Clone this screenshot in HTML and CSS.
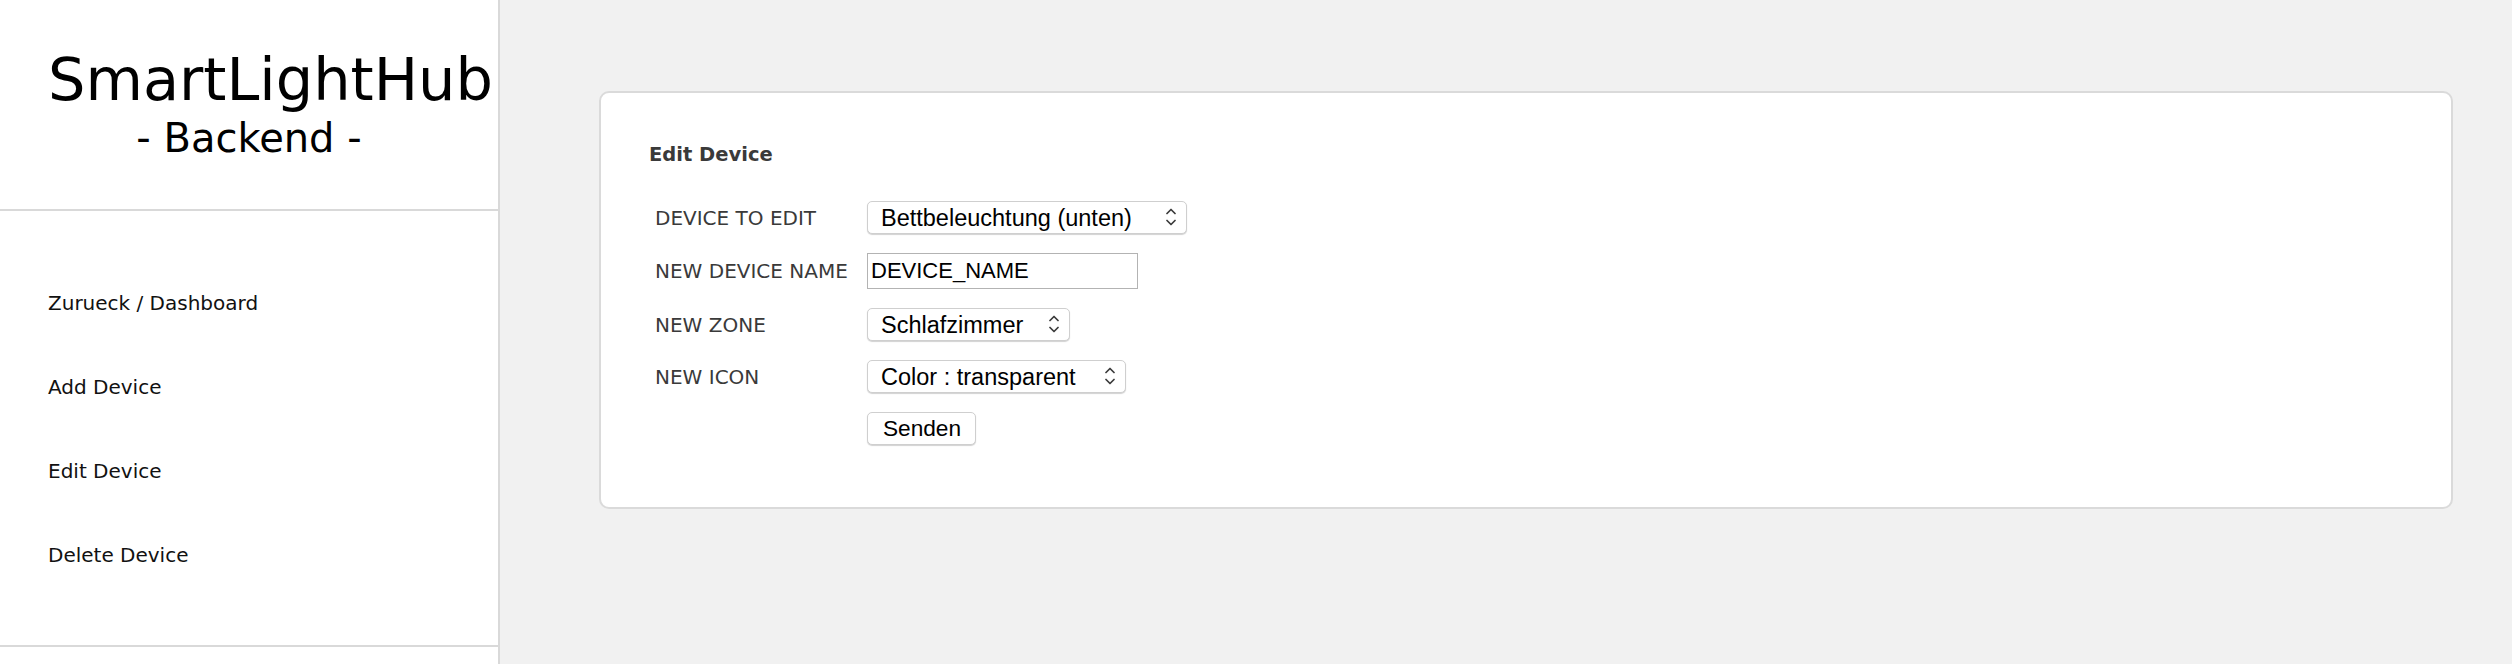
FILE: index.html
```html
<!DOCTYPE html>
<html lang="de">
<head>
<meta charset="utf-8">
<title>SmartLightHub - Backend</title>
<link rel="stylesheet" href="styles.css">
</head>
<body>
<aside class="sidebar">
  <header class="brand">
    <h1 class="brand-title">SmartLightHub</h1>
    <div class="brand-sub">- Backend -</div>
  </header>
  <nav class="nav">
    <a class="nav-link" href="#">Zurueck / Dashboard</a>
    <a class="nav-link" href="#">Add Device</a>
    <a class="nav-link" href="#">Edit Device</a>
    <a class="nav-link" href="#">Delete Device</a>
  </nav>
</aside>
<main class="main">
  <section class="card">
    <h2 class="card-title">Edit Device</h2>
    <form class="form-grid">
      <label class="field-label">DEVICE TO EDIT</label>
      <span class="select-wrap sel-device">
        <select class="select"><option>Bettbeleuchtung (unten)</option></select>
        <svg class="chev" width="10" height="20" viewBox="0 0 10 20"><path d="M1 6.5 L5 2.5 L9 6.5 M1 13.5 L5 17.5 L9 13.5" fill="none" stroke="#3a3a3a" stroke-width="1.7" stroke-linecap="round" stroke-linejoin="round"/></svg>
      </span>
      <label class="field-label">NEW DEVICE NAME</label>
      <input class="text-input" type="text" value="DEVICE_NAME">
      <label class="field-label">NEW ZONE</label>
      <span class="select-wrap sel-zone">
        <select class="select"><option>Schlafzimmer</option></select>
        <svg class="chev" width="10" height="20" viewBox="0 0 10 20"><path d="M1 6.5 L5 2.5 L9 6.5 M1 13.5 L5 17.5 L9 13.5" fill="none" stroke="#3a3a3a" stroke-width="1.7" stroke-linecap="round" stroke-linejoin="round"/></svg>
      </span>
      <label class="field-label">NEW ICON</label>
      <span class="select-wrap sel-icon">
        <select class="select"><option>Color : transparent</option></select>
        <svg class="chev" width="10" height="20" viewBox="0 0 10 20"><path d="M1 6.5 L5 2.5 L9 6.5 M1 13.5 L5 17.5 L9 13.5" fill="none" stroke="#3a3a3a" stroke-width="1.7" stroke-linecap="round" stroke-linejoin="round"/></svg>
      </span>
      <span class="field-label"></span>
      <div><button class="btn" type="button">Senden</button></div>
    </form>
  </section>
</main>
</body>
</html>
```

FILE: styles.css
```css
* { box-sizing: border-box; }
html, body { margin: 0; padding: 0; }
body {
  display: flex;
  min-height: 664px;
  background: #f1f1f1;
  font-family: "DejaVu Sans", Verdana, sans-serif;
  color: #000;
}
.sidebar {
  width: 500px;
  flex: 0 0 500px;
  background: #fff;
  border-right: 2px solid #d9d9d9;
}
.brand {
  padding: 48px 48px 48px;
  border-bottom: 2px solid #d9d9d9;
  text-align: center;
}
.brand-title {
  margin: 0;
  font-weight: normal;
  font-size: 59px;
  line-height: 64px;
  white-space: nowrap;
  text-align: left;
}
.brand-sub {
  margin-top: 3px;
  font-size: 40px;
  line-height: 46px;
}
.nav {
  display: flex;
  flex-direction: column;
  padding: 50px 48px 48px;
  border-bottom: 2px solid #d9d9d9;
}
.nav-link {
  display: block;
  padding: 30px 0;
  font-size: 20px;
  line-height: 24px;
  color: #111;
  text-decoration: none;
}
.main {
  flex: 1;
  padding: 91px 59px 0 99px;
}
.card {
  background: #fff;
  border: 2px solid #dadada;
  border-radius: 10px;
  padding: 50px 48px 62px;
}
.card-title {
  margin: 0 0 34px;
  font-size: 19.5px;
  line-height: 24px;
  font-weight: bold;
  color: #3a3a3a;
}
.form-grid {
  display: grid;
  grid-template-columns: 198px auto;
  justify-content: start;
  align-items: center;
  column-gap: 14px;
  row-gap: 19px;
  margin-left: 6px;
}
.field-label {
  font-size: 20px;
  line-height: 24px;
  color: #3a3a3a;
  white-space: nowrap;
}
.select-wrap {
  position: relative;
  display: block;
  height: 33px;
}
.sel-device { width: 320px; }
.sel-zone { width: 203px; }
.sel-icon { width: 259px; }
.select {
  -webkit-appearance: none;
  appearance: none;
  width: 100%;
  height: 33px;
  margin: 0;
  padding: 0 30px 0 13px;
  font-family: "Liberation Sans", Arial, sans-serif;
  font-size: 23.5px;
  color: #000;
  background: #fff;
  border: 1px solid #cfcfcf;
  border-radius: 5px;
  box-shadow: 0 1px 1px rgba(0,0,0,0.18);
  outline: none;
}
.chev {
  position: absolute;
  right: 11px;
  top: 6px;
  pointer-events: none;
}
.text-input {
  width: 271px;
  height: 36px;
  margin: 0;
  padding: 0 3px;
  font-family: "Liberation Sans", Arial, sans-serif;
  font-size: 22px;
  color: #000;
  background: #fff;
  border: 1px solid #b3b3b3;
  border-radius: 0;
  outline: none;
}
.btn {
  height: 33px;
  width: 109px;
  margin: 0;
  padding: 0 0 0 1px;
  font-family: "Liberation Sans", Arial, sans-serif;
  font-size: 22.7px;
  color: #000;
  background: #fff;
  border: 1px solid #cfcfcf;
  border-radius: 5px;
  box-shadow: 0 1px 1px rgba(0,0,0,0.18);
}
```
